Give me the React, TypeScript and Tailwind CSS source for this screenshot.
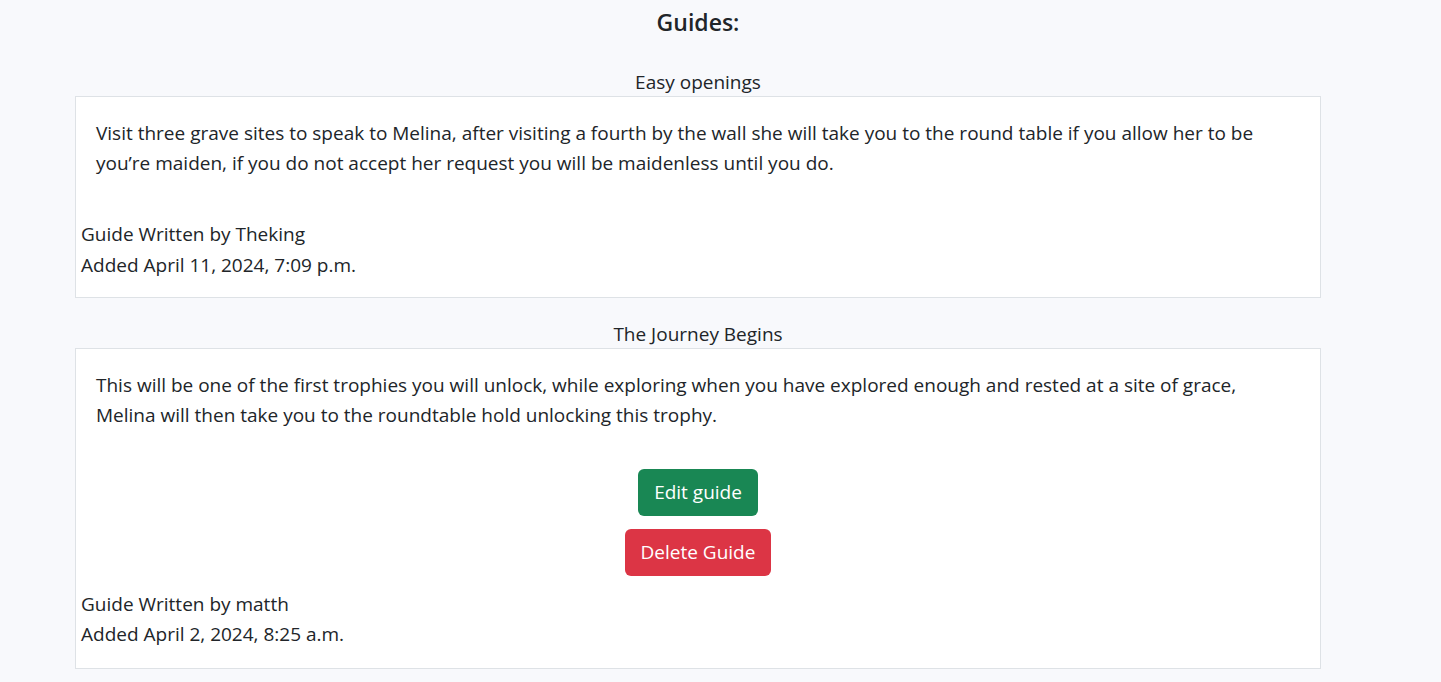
export default function App() {
  return (
    <div className="min-h-screen bg-[#f8f9fc] text-[#212529] font-['Open_Sans',sans-serif]">
      <div className="ml-[75px] w-[1246px]">
        <h2 className="text-center text-[23px] font-semibold leading-[44px]">Guides:</h2>
        <h5 className="mt-[24px] text-center text-[19px] leading-[28px]">Easy openings</h5>
        <div className="border border-[#dee2e6] bg-white">
          <p className="pl-[20px] pr-[40px] pt-[21px] text-[19px] leading-[30px]">
            Visit three grave sites to speak to Melina, after visiting a fourth by the wall she will take you to the round table if you allow her to be you’re maiden, if you do not accept her request you will be maidenless until you do.
          </p>
          <div className="mt-[40px] px-[5px] pb-[17px] text-[19px]">
            <p className="leading-[32px]">Guide Written by Theking</p>
            <p className="leading-[30px]">Added April 11, 2024, 7:09 p.m.</p>
          </div>
        </div>
        <h5 className="mt-[22px] text-center text-[19px] leading-[28px]">The Journey Begins</h5>
        <div className="border border-[#dee2e6] bg-white">
          <p className="pl-[20px] pr-[40px] pt-[21px] text-[19px] leading-[30px]">
            This will be one of the first trophies you will unlock, while exploring when you have explored enough and rested at a site of grace, Melina will then take you to the roundtable hold unlocking this trophy.
          </p>
          <div className="mt-[39px] flex flex-col items-center gap-[13px]">
            <button className="h-[47px] rounded-[6px] bg-[#198754] px-[16px] text-[19px] text-white">Edit guide</button>
            <button className="h-[47px] rounded-[6px] bg-[#dc3545] px-[16px] text-[19px] text-white">Delete Guide</button>
          </div>
          <div className="mt-[13px] px-[5px] pb-[19px] text-[19px]">
            <p className="leading-[30px]">Guide Written by matth</p>
            <p className="leading-[30px]">Added April 2, 2024, 8:25 a.m.</p>
          </div>
        </div>
      </div>
    </div>
  );
}
